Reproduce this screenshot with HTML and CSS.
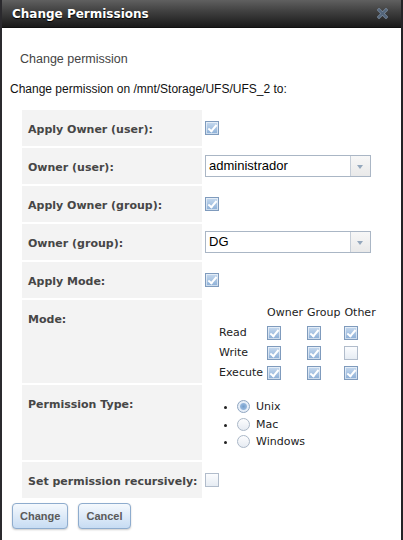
FILE: index.html
```html
<!DOCTYPE html>
<html>
    <head>
        <meta charset="utf-8">
        <title>Change Permissions</title>
        <link rel="stylesheet" href="styles.css">
    </head>
    <body>
        <div class="dialog">
            <div class="titlebar">
                <span class="title">Change Permissions</span>
                <span class="close">
                    <svg width="11" height="11" viewBox="0 0 11 11">
                        <path d="M2 2 L9 9 M9 2 L2 9" stroke="#7a8a9c" stroke-width="3.2" stroke-linecap="square"/>
                        <path d="M2 2 L9 9 M9 2 L2 9" stroke="#52647a" stroke-width="1.8" stroke-linecap="square"/>
                    </svg>
                </span>
            </div>
            <div class="content">
                <p class="heading">Change permission</p>
                <p class="path">Change permission on /mnt/Storage/UFS/UFS_2 to:</p>

                <table class="form">
                    <tr>
                        <th>Apply Owner (user):</th>
                        <td><span class="cb checked"></span></td>
                    </tr>
                    <tr>
                        <th>Owner (user):</th>
                        <td>
                            <div class="select">
                                <span class="select-value">administrador</span>
                                <span class="select-arrow"></span>
                            </div>
                        </td>
                    </tr>
                    <tr>
                        <th>Apply Owner (group):</th>
                        <td><span class="cb checked"></span></td>
                    </tr>
                    <tr>
                        <th>Owner (group):</th>
                        <td>
                            <div class="select">
                                <span class="select-value">DG</span>
                                <span class="select-arrow"></span>
                            </div>
                        </td>
                    </tr>
                    <tr>
                        <th>Apply Mode:</th>
                        <td><span class="cb checked"></span></td>
                    </tr>
                    <tr>
                        <th>Mode:</th>
                        <td class="top">
                            <div class="mode">
                                <span></span><span>Owner</span><span>Group</span><span>Other</span>
                                <span>Read</span><span class="cb checked"></span><span class="cb checked"></span><span class="cb checked"></span>
                                <span>Write</span><span class="cb checked"></span><span class="cb checked"></span><span class="cb"></span>
                                <span>Execute</span><span class="cb checked"></span><span class="cb checked"></span><span class="cb checked"></span>
                            </div>
                        </td>
                    </tr>
                    <tr>
                        <th>Permission Type:</th>
                        <td class="top">
                            <ul class="radios">
                                <li><span class="radio on"></span>Unix</li>
                                <li><span class="radio"></span>Mac</li>
                                <li><span class="radio"></span>Windows</li>
                            </ul>
                        </td>
                    </tr>
                    <tr>
                        <th>Set permission recursively:</th>
                        <td><span class="cb"></span></td>
                    </tr>
                </table>

                <div class="buttons">
                    <button class="btn">Change</button>
                    <button class="btn">Cancel</button>
                </div>
            </div>
        </div>
    </body>
</html>
```

FILE: styles.css
```css
body {
    margin: 0px;
    background-color: #2a2630;
    font-family: "DejaVu Sans", Verdana, sans-serif;
}
.dialog {
    width: 399px;
    height: 540px;
    border-left: 2px solid #2b2a2e;
    border-right: 2px solid #242326;
    background-color: #fff;
}
.titlebar {
    height: 27px;
    line-height: 28px;
    padding-left: 10px;
    background-image: linear-gradient(to bottom, #606060, #3e3e3e 45%, #1a1a1a);
    border-bottom: 1px solid #111;
    display: flex;
    justify-content: space-between;
}
.title {
    color: #fff;
    font-weight: bold;
    font-size: 12px;
    text-shadow: 0 1px 1px #000;
}
.close {
    width: 11px;
    height: 11px;
    margin: 8px 13px 0 0;
    line-height: 0;
}
.content {
    padding: 0 8px;
}
.heading {
    margin: 24px 0 0 10px;
    font-family: "Liberation Sans", Arial, sans-serif;
    font-size: 12.5px;
    line-height: 14px;
    color: #444;
}
.path {
    margin: 16px 0 0 0;
    font-family: "Liberation Sans", Arial, sans-serif;
    font-size: 12px;
    line-height: 14px;
    color: #111;
}
.form {
    margin: 12px 0 0 10px;
    border-spacing: 2px;
    table-layout: fixed;
    width: 364px;
}
.form th {
    width: 168px;
    padding: 13px 6px 9px;
    background-color: #f3f3f3;
    text-align: left;
    vertical-align: top;
    font-size: 11px;
    line-height: 14px;
    color: #464646;
    white-space: nowrap;
}
.form td {
    padding: 0 1px;
    vertical-align: middle;
    line-height: 0;
}
.form td.top {
    vertical-align: top;
}

/* checkboxes */
.cb {
    display: inline-block;
    position: relative;
    box-sizing: border-box;
    width: 14px;
    height: 14px;
    border: 1px solid #b1bccb;
    background-image: linear-gradient(to bottom, #fbfcfe, #e6ecf3);
}
.cb.checked {
    border-color: #7f9bbd;
    background-image: linear-gradient(to bottom, #c6d9ee, #8cafd7);
    box-shadow: inset 0 0 0 1px rgba(255, 255, 255, 0.55);
}
.cb.checked::after {
    content: "";
    position: absolute;
    left: 4px;
    top: 1px;
    width: 3px;
    height: 7px;
    border-right: 2px solid #fff;
    border-bottom: 2px solid #fff;
    transform: rotate(40deg);
}

/* dropdowns */
.select {
    display: flex;
    width: 166px;
    height: 22px;
    box-sizing: border-box;
    border: 1px solid #aab6c5;
    background-color: #fff;
}
.select-value {
    flex: 1;
    padding-left: 3px;
    font-family: "Liberation Sans", Arial, sans-serif;
    font-size: 13px;
    line-height: 20px;
    color: #000;
}
.select-arrow {
    position: relative;
    width: 19px;
    border-left: 1px solid #c6ced8;
    background-image: linear-gradient(to bottom, #f7f7f7, #e9e9e9);
}
.select-arrow::after {
    content: "";
    position: absolute;
    left: 6px;
    top: 9px;
    border-left: 3.5px solid transparent;
    border-right: 3.5px solid transparent;
    border-top: 4px solid #94a7bc;
}

/* mode grid */
.mode {
    display: inline-grid;
    grid-template-columns: auto auto auto auto;
    grid-auto-rows: 20px;
    column-gap: 4px;
    align-items: center;
    margin: 3px 0 0 14px;
    font-size: 11px;
    line-height: 14px;
    color: #222;
}

/* radio list */
.radios {
    margin: 13px 0 9px;
    padding-left: 32px;
    font-size: 11px;
    color: #222;
}
.radios li {
    height: 17.5px;
    line-height: 17.5px;
}
.radio {
    display: inline-block;
    box-sizing: border-box;
    width: 13px;
    height: 13px;
    margin-right: 6px;
    vertical-align: -3px;
    border-radius: 50%;
    border: 1px solid #aab7c7;
    background-image: linear-gradient(to bottom, #fdfdfe, #e6ebf2);
}
.radio.on {
    border-color: #8ea5c0;
    background-image: radial-gradient(circle, #729dcb 0, #94b6dc 3px, #e6eef8 4px);
}

/* buttons */
.buttons {
    margin: 3px 0 0 2px;
}
.btn {
    margin-right: 5px;
    padding: 5px 7px;
    font-family: "Liberation Sans", Arial, sans-serif;
    font-weight: bold;
    font-size: 11px;
    line-height: 14px;
    color: #5a5a5a;
    border: 1px solid #8eacce;
    border-radius: 4px;
    background-image: linear-gradient(to bottom, #f5f9fd, #c7dcf3);
    box-shadow: 0 1px 2px rgba(0, 0, 0, 0.2);
}
```
